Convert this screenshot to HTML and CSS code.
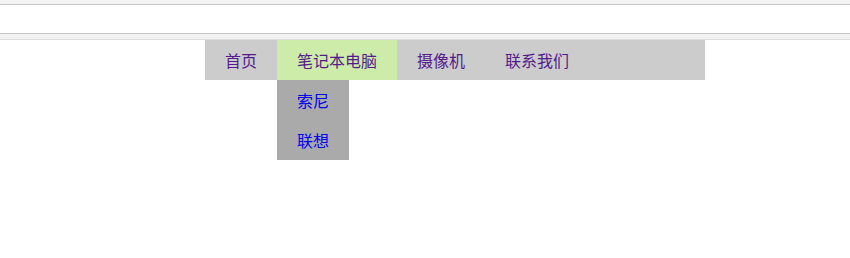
FILE: index.html
```html
<!DOCTYPE html>
<html lang="zh">
<head>
<meta charset="utf-8">
<title>导航</title>
<link rel="stylesheet" href="styles.css">
</head>
<body>
<div class="topbar"></div>
<div class="field"></div>
<div class="underbar"></div>
<div class="menu">
  <div class="menubar">
    <a class="nav-link" href="#">首页</a>
    <a class="nav-link active" href="#">笔记本电脑</a>
    <a class="nav-link" href="#">摄像机</a>
    <a class="nav-link" href="#">联系我们</a>
  </div>
  <div class="drop">
    <a class="drop-link" href="#">索尼</a>
    <a class="drop-link" href="#">联想</a>
  </div>
</div>
</body>
</html>
```
FILE: styles.css
```css
html, body {
  margin: 0;
  padding: 0;
  background: #fff;
  font-family: "Noto Sans CJK SC", "Noto Sans", sans-serif;
}
.topbar {
  height: 4px;
  background: #f3f3f3;
  border-bottom: 1px solid #c3c3c3;
}
.field {
  height: 28px;
  background: #fff;
  border-bottom: 1px solid #c3c3c3;
}
.underbar {
  height: 5px;
  background: #f2f2f2;
  border-bottom: 1px solid #dedede;
}
.menu {
  padding-left: 205px;
}
.menubar {
  width: 500px;
  height: 40px;
  background: #cccccc;
  display: flex;
}
.nav-link {
  display: block;
  height: 40px;
  line-height: 40px;
  padding: 0 20px;
  font-size: 16px;
  color: #551a8b;
  text-decoration: none;
  white-space: nowrap;
}
.nav-link.active {
  background: #cdeca9;
}
.drop {
  display: flex;
  flex-direction: column;
  width: 72px;
  margin-left: 72px;
  background: #aaaaaa;
}
.drop-link {
  display: block;
  height: 40px;
  line-height: 40px;
  padding: 0 20px;
  font-size: 16px;
  color: #0000ee;
  text-decoration: none;
  white-space: nowrap;
}
```
